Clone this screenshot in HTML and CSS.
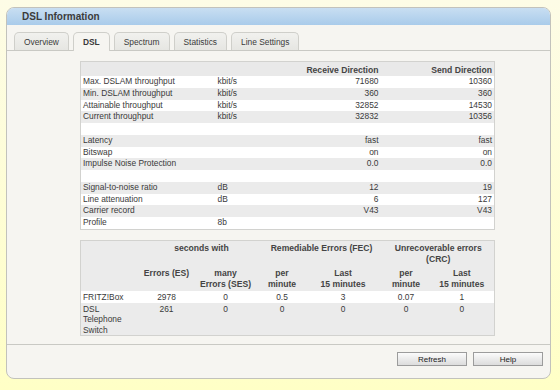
FILE: index.html
```html
<!DOCTYPE html>
<html lang="en">
<head>
    <meta charset="UTF-8">
    <title>DSL Information</title>
    <link rel="stylesheet" href="styles.css">
</head>
<body>
    <div class="box">
        <div class="box-title">DSL Information</div>
        <div class="tabs">
            <a href="#overview" class="tab">Overview</a>
            <a href="#dsl" class="tab active">DSL</a>
            <a href="#spectrum" class="tab">Spectrum</a>
            <a href="#statistics" class="tab">Statistics</a>
            <a href="#settings" class="tab">Line Settings</a>
        </div>

        <div class="content">
            <table class="info">
                <colgroup>
                    <col style="width:135px">
                    <col style="width:85px">
                    <col style="width:80px">
                    <col>
                </colgroup>
                <tr class="head">
                    <th></th>
                    <th></th>
                    <th class="num">Receive Direction</th>
                    <th class="num">Send Direction</th>
                </tr>
                <tr><td>Max. DSLAM throughput</td><td>kbit/s</td><td class="num">71680</td><td class="num">10360</td></tr>
                <tr><td>Min. DSLAM throughput</td><td>kbit/s</td><td class="num">360</td><td class="num">360</td></tr>
                <tr><td>Attainable throughput</td><td>kbit/s</td><td class="num">32852</td><td class="num">14530</td></tr>
                <tr><td>Current throughput</td><td>kbit/s</td><td class="num">32832</td><td class="num">10356</td></tr>
                <tr><td></td><td></td><td></td><td></td></tr>
                <tr><td>Latency</td><td></td><td class="num">fast</td><td class="num">fast</td></tr>
                <tr><td>Bitswap</td><td></td><td class="num">on</td><td class="num">on</td></tr>
                <tr><td>Impulse Noise Protection</td><td></td><td class="num">0.0</td><td class="num">0.0</td></tr>
                <tr><td></td><td></td><td></td><td></td></tr>
                <tr><td>Signal-to-noise ratio</td><td>dB</td><td class="num">12</td><td class="num">19</td></tr>
                <tr><td>Line attenuation</td><td>dB</td><td class="num">6</td><td class="num">127</td></tr>
                <tr><td>Carrier record</td><td></td><td class="num">V43</td><td class="num">V43</td></tr>
                <tr><td>Profile</td><td>8b</td><td></td><td></td></tr>
            </table>

            <table class="errors">
                <colgroup>
                    <col style="width:62px">
                    <col style="width:48px">
                    <col style="width:70px">
                    <col style="width:43px">
                    <col style="width:79px">
                    <col style="width:47px">
                    <col>
                </colgroup>
                <tr class="head1">
                    <th></th>
                    <th colspan="2">seconds with</th>
                    <th colspan="2">Remediable Errors (FEC)</th>
                    <th colspan="2">Unrecoverable errors (CRC)</th>
                </tr>
                <tr class="head2">
                    <th></th>
                    <th>Errors (ES)</th>
                    <th>many<br>Errors (SES)</th>
                    <th>per<br>minute</th>
                    <th>Last<br>15 minutes</th>
                    <th>per<br>minute</th>
                    <th>Last<br>15 minutes</th>
                </tr>
                <tr class="light">
                    <td class="name">FRITZ!Box</td>
                    <td>2978</td><td>0</td><td>0.5</td><td>3</td><td>0.07</td><td>1</td>
                </tr>
                <tr class="tall">
                    <td class="name">DSL<br>Telephone<br>Switch</td>
                    <td>261</td><td>0</td><td>0</td><td>0</td><td>0</td><td>0</td>
                </tr>
            </table>
        </div>

        <div class="buttons">
            <button>Refresh</button>
            <button>Help</button>
        </div>
    </div>
</body>
</html>
```

FILE: styles.css
```css
body {
  margin:0;
  padding:7px 9px 9px 6px;
  background:linear-gradient(#fdfce6, #ffffc6);
  font-family:"Liberation Sans", Arial, sans-serif;
  font-size:8.4px;
  color:#3a3a3a;
  height:374px;
}
.box {
  border:1px solid #c2c2bc;
  border-radius:8px;
  background:#f6f5f1;
  overflow:hidden;
}
.box-title {
  height:17px;
  line-height:17px;
  padding-left:15px;
  background:linear-gradient(#c8def2, #a9cbea);
  font-size:10px;
  font-weight:bold;
  color:#3b3b3b;
}
.tabs {
  display:flex;
  gap:4px;
  margin-top:7px;
  padding-left:7px;
  height:18px;
  border-bottom:1px solid #c9c9c4;
}
.tab {
  display:flex;
  align-items:center;
  padding:0 9px;
  border:1px solid #cfcfca;
  border-bottom:none;
  border-radius:5px 5px 0 0;
  background:linear-gradient(#f1f1ee, #e6e6e2);
  color:#3a3a3a;
  text-decoration:none;
}
.tab.active {
  background:#f6f5f1;
  font-weight:bold;
  height:18px;
  margin-bottom:-1px;
}
.content {
  padding:10px 55px 8px 73px;
  border-bottom:1px solid #c9c9c4;
}
table {
  width:100%;
  border-collapse:collapse;
  table-layout:fixed;
  border:1px solid #d2d2cf;
}
th {
  font-size:8.6px;
  font-weight:bold;
  color:#444;
  white-space:nowrap;
}
.info th {
  height:13px;
  padding:1px 2px 0;
  background:#e9e9e9;
}
.info td {
  height:11.75px;
  line-height:11.75px;
  padding:0 2px;
  white-space:nowrap;
}
.info tr:nth-child(even) td {
  background:#fff;
}
.info tr:nth-child(odd) td {
  background:#ebebeb;
}
.num {
  text-align:right;
}
.errors {
  margin-top:10px;
  background:#ebebeb;
}
.errors th {
  line-height:11px;
  vertical-align:top;
  padding:2px 0 0;
}
.errors .head1 th {
  white-space:normal;
}
.errors .head2 th {
  padding:3px 0 1px;
}
.errors td {
  text-align:center;
  line-height:12px;
  padding:0 1px;
  vertical-align:top;
}
.errors td.name {
  text-align:left;
  padding-left:2px;
}
.errors .light td {
  background:#fff;
}
.errors .tall td {
  line-height:10.5px;
  padding-top:1px;
  padding-bottom:0;
}
.buttons {
  display:flex;
  justify-content:flex-end;
  gap:6px;
  padding:7px 7px 12px;
}
.buttons button {
  width:70px;
  height:14px;
  padding:0;
  border:1px solid #9c9c9c;
  background:linear-gradient(#fbfbfb, #dcdcdc);
  font-family:"Liberation Sans", Arial, sans-serif;
  font-size:8px;
  color:#222;
}
```
